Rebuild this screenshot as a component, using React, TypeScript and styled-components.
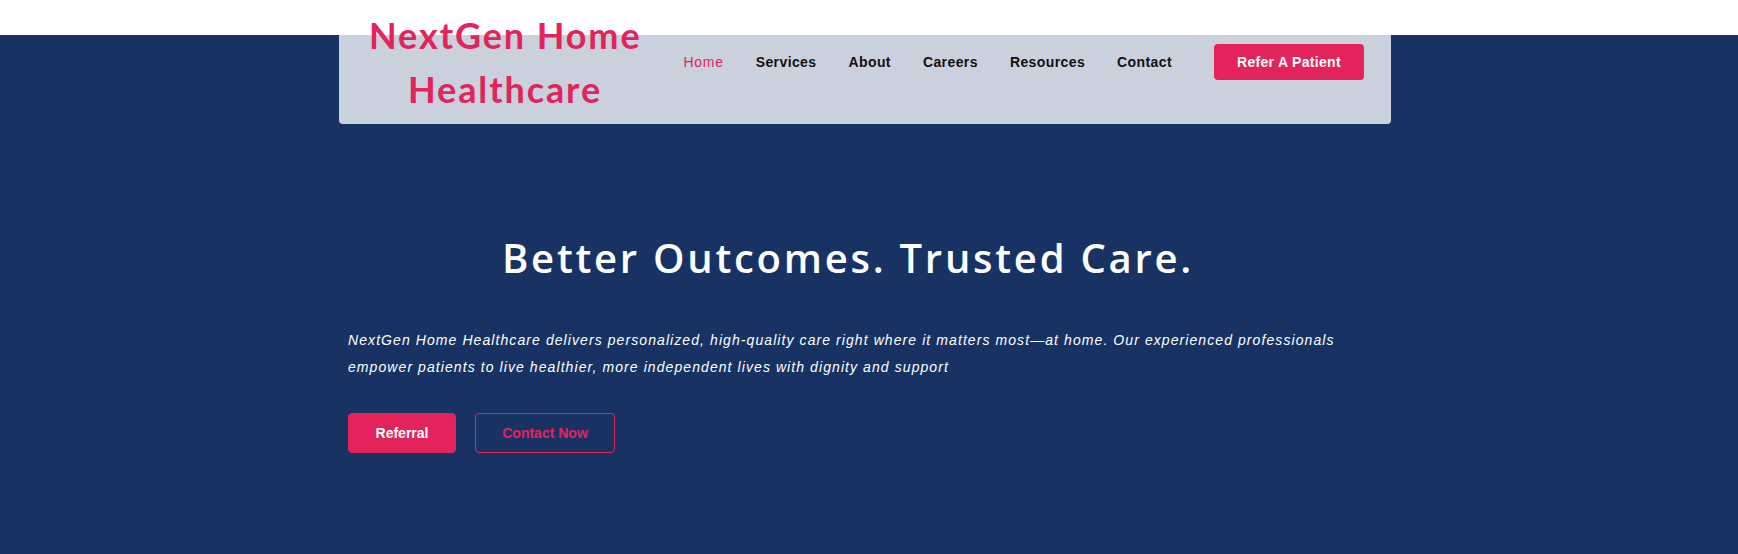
import React from 'react';
import styled, { createGlobalStyle } from 'styled-components';

const GlobalStyle = createGlobalStyle`
  * {
    box-sizing: border-box;
  }
  html, body {
    margin: 0;
    padding: 0;
  }
  body {
    font-family: "Liberation Sans", Arial, sans-serif;
    background: linear-gradient(to bottom, #ffffff 0 35px, #183264 35px);
    min-height: 554px;
  }
`;

const pink = '#e3245c';

const Page = styled.div`
  width: 100%;
  min-height: 554px;
  display: flex;
  flex-direction: column;
`;

const Header = styled.header`
  width: 1052px;
  margin: 0 347px 0 339px;
  height: 124px;
  padding: 8px 27px 8px 30px;
  display: flex;
  align-items: center;
  border-radius: 0 0 4px 4px;
  background: linear-gradient(to bottom, #ffffff 0 35px, #cad0dc 35px);
`;

const Logo = styled.div`
  width: 272px;
  font-family: Lato, "Noto Sans", sans-serif;
  font-weight: 700;
  font-size: 36px;
  line-height: 54px;
  letter-spacing: 1.9px;
  white-space: nowrap;
  color: ${pink};
  text-align: center;
`;

const Nav = styled.nav`
  margin-left: auto;
  display: flex;
  align-items: center;
  gap: 32px;
`;

const NavLink = styled.a<{ $active?: boolean }>`
  font-size: 14px;
  letter-spacing: ${(p) => (p.$active ? '0.7px' : '0.4px')};
  font-weight: ${(p) => (p.$active ? 400 : 700)};
  color: ${(p) => (p.$active ? pink : '#111111')};
  text-decoration: none;
  cursor: pointer;
`;

const ReferButton = styled.button`
  margin-left: 10px;
  width: 150px;
  height: 36px;
  border: none;
  border-radius: 4px;
  background: ${pink};
  color: #ffffff;
  font-family: "Liberation Sans", Arial, sans-serif;
  font-size: 14px;
  font-weight: 700;
  letter-spacing: 0.3px;
  cursor: pointer;
`;

const Hero = styled.section`
  width: 1000px;
  margin: 110px 0 0 348px;
  color: #ffffff;
`;

const Title = styled.h1`
  margin: 0;
  font-family: "Open Sans", "Noto Sans", sans-serif;
  font-weight: 600;
  font-size: 40px;
  line-height: 48px;
  letter-spacing: 2.75px;
  text-align: center;
`;

const Lead = styled.p`
  margin: 45px 0 0;
  font-size: 14px;
  font-style: italic;
  letter-spacing: 1.08px;
  line-height: 27px;
`;

const Actions = styled.div`
  margin-top: 32px;
  display: flex;
  gap: 19px;
`;

const ActionButton = styled.button<{ $outline?: boolean }>`
  height: 40px;
  width: ${(p) => (p.$outline ? '140px' : '108px')};
  border-radius: 4px;
  border: 1px solid ${pink};
  background: ${(p) => (p.$outline ? 'transparent' : pink)};
  color: ${(p) => (p.$outline ? pink : '#ffffff')};
  font-family: "Liberation Sans", Arial, sans-serif;
  font-size: 14px;
  font-weight: 700;
  cursor: pointer;
`;

const navItems = ['Home', 'Services', 'About', 'Careers', 'Resources', 'Contact'];

const App: React.FC = () => {
  return (
    <Page>
      <GlobalStyle />
      <Header>
        <Logo>
          NextGen Home
          <br />
          Healthcare
        </Logo>
        <Nav>
          {navItems.map((item) => (
            <NavLink key={item} $active={item === 'Home'}>
              {item}
            </NavLink>
          ))}
          <ReferButton>Refer A Patient</ReferButton>
        </Nav>
      </Header>
      <Hero>
        <Title>Better Outcomes. Trusted Care.</Title>
        <Lead>
          NextGen Home Healthcare delivers personalized, high-quality care right where it matters
          most—at home. Our experienced professionals empower patients to live healthier, more
          independent lives with dignity and support
        </Lead>
        <Actions>
          <ActionButton>Referral</ActionButton>
          <ActionButton $outline>Contact Now</ActionButton>
        </Actions>
      </Hero>
    </Page>
  );
};

export default App;
